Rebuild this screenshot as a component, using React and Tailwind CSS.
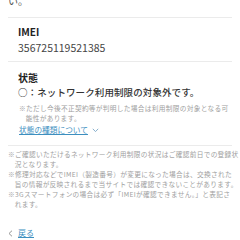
import React from "react";

const Note = ({ lines }) => (
  <div>
    {lines.map((l, i) => (
      <div key={i} className={`whitespace-nowrap ${i > 0 ? "pl-[1em]" : ""}`}>
        {l}
      </div>
    ))}
  </div>
);

export default function App() {
  return (
    <div
      className="w-[240px] h-[240px] overflow-hidden bg-white text-[#333]"
      style={{ fontFamily: '"Noto Sans CJK JP", "Noto Sans", sans-serif' }}
    >
      <div className="px-2">
        <div className="mt-[-4px] h-[11px] text-[10px] leading-[10px] text-[#555]">い。</div>
        <div className="mt-[10px] border-t border-[#ebebeb] pl-[10px] pt-[7px] pb-[6px]">
          <div className="text-[10px] leading-[14px] font-bold text-[#222]">IMEI</div>
          <div className="mt-[2px] text-[10.5px] leading-[14px] text-[#444]">356725119521385</div>
        </div>
        <div className="border-t border-[#ebebeb] pl-[10px] pt-[10px] pb-[10px]">
          <div className="text-[10px] leading-[12px] font-bold text-[#222]">状態</div>
          <div className="mt-[2px] text-[9.5px] leading-[12px] font-medium tracking-[0.1px] text-[#333] whitespace-nowrap">
            ○：ネットワーク利用制限の対象外です。
          </div>
          <div className="mt-[6px] pl-[1px] text-[6.7px] leading-[9.5px] tracking-[0.3px] text-[#a0a0a0]">
            <Note
              lines={[
                "※ただし今後不正契約等が判明した場合は利用制限の対象となる可",
                "能性があります。",
              ]}
            />
          </div>
          <div className="mt-[2px] pl-[1px] flex items-center gap-[4px] h-[10px]">
            <span className="text-[7.7px] leading-[10px] text-[#3d8fbf] underline underline-offset-[1px]">
              状態の種類について
            </span>
            <svg width="7" height="5" viewBox="0 0 7 5" className="text-[#7aa7c7]">
              <path d="M0.8 0.8 L3.5 3.6 L6.2 0.8" fill="none" stroke="currentColor" strokeWidth="0.9" />
            </svg>
          </div>
        </div>
        <div className="border-t border-[#ebebeb] pt-[3px] text-[6.7px] leading-[10px] tracking-[0.3px] text-[#a0a0a0]">
          <Note
            lines={[
              "※ご確認いただけるネットワーク利用制限の状況はご確認前日での登録状",
              "況となります。",
            ]}
          />
          <Note
            lines={[
              "※修理対応などでIMEI（製造番号）が変更になった場合は、交換された",
              "旨の情報が反映されるまで当サイトでは確認できないことがあります。",
            ]}
          />
          <Note
            lines={[
              "※3Gスマートフォンの場合は必ず「IMEIが確認できません。」と表記さ",
              "れます。",
            ]}
          />
        </div>
        <div className="mt-[19px] flex items-center gap-[5px] h-[10px]">
          <svg width="5" height="7" viewBox="0 0 5 7" className="text-[#8a8a8a]">
            <path d="M4 0.7 L1 3.5 L4 6.3" fill="none" stroke="currentColor" strokeWidth="0.9" />
          </svg>
          <span className="text-[8px] leading-[10px] text-[#3d8fbf] underline underline-offset-[1px]">戻る</span>
        </div>
      </div>
    </div>
  );
}
